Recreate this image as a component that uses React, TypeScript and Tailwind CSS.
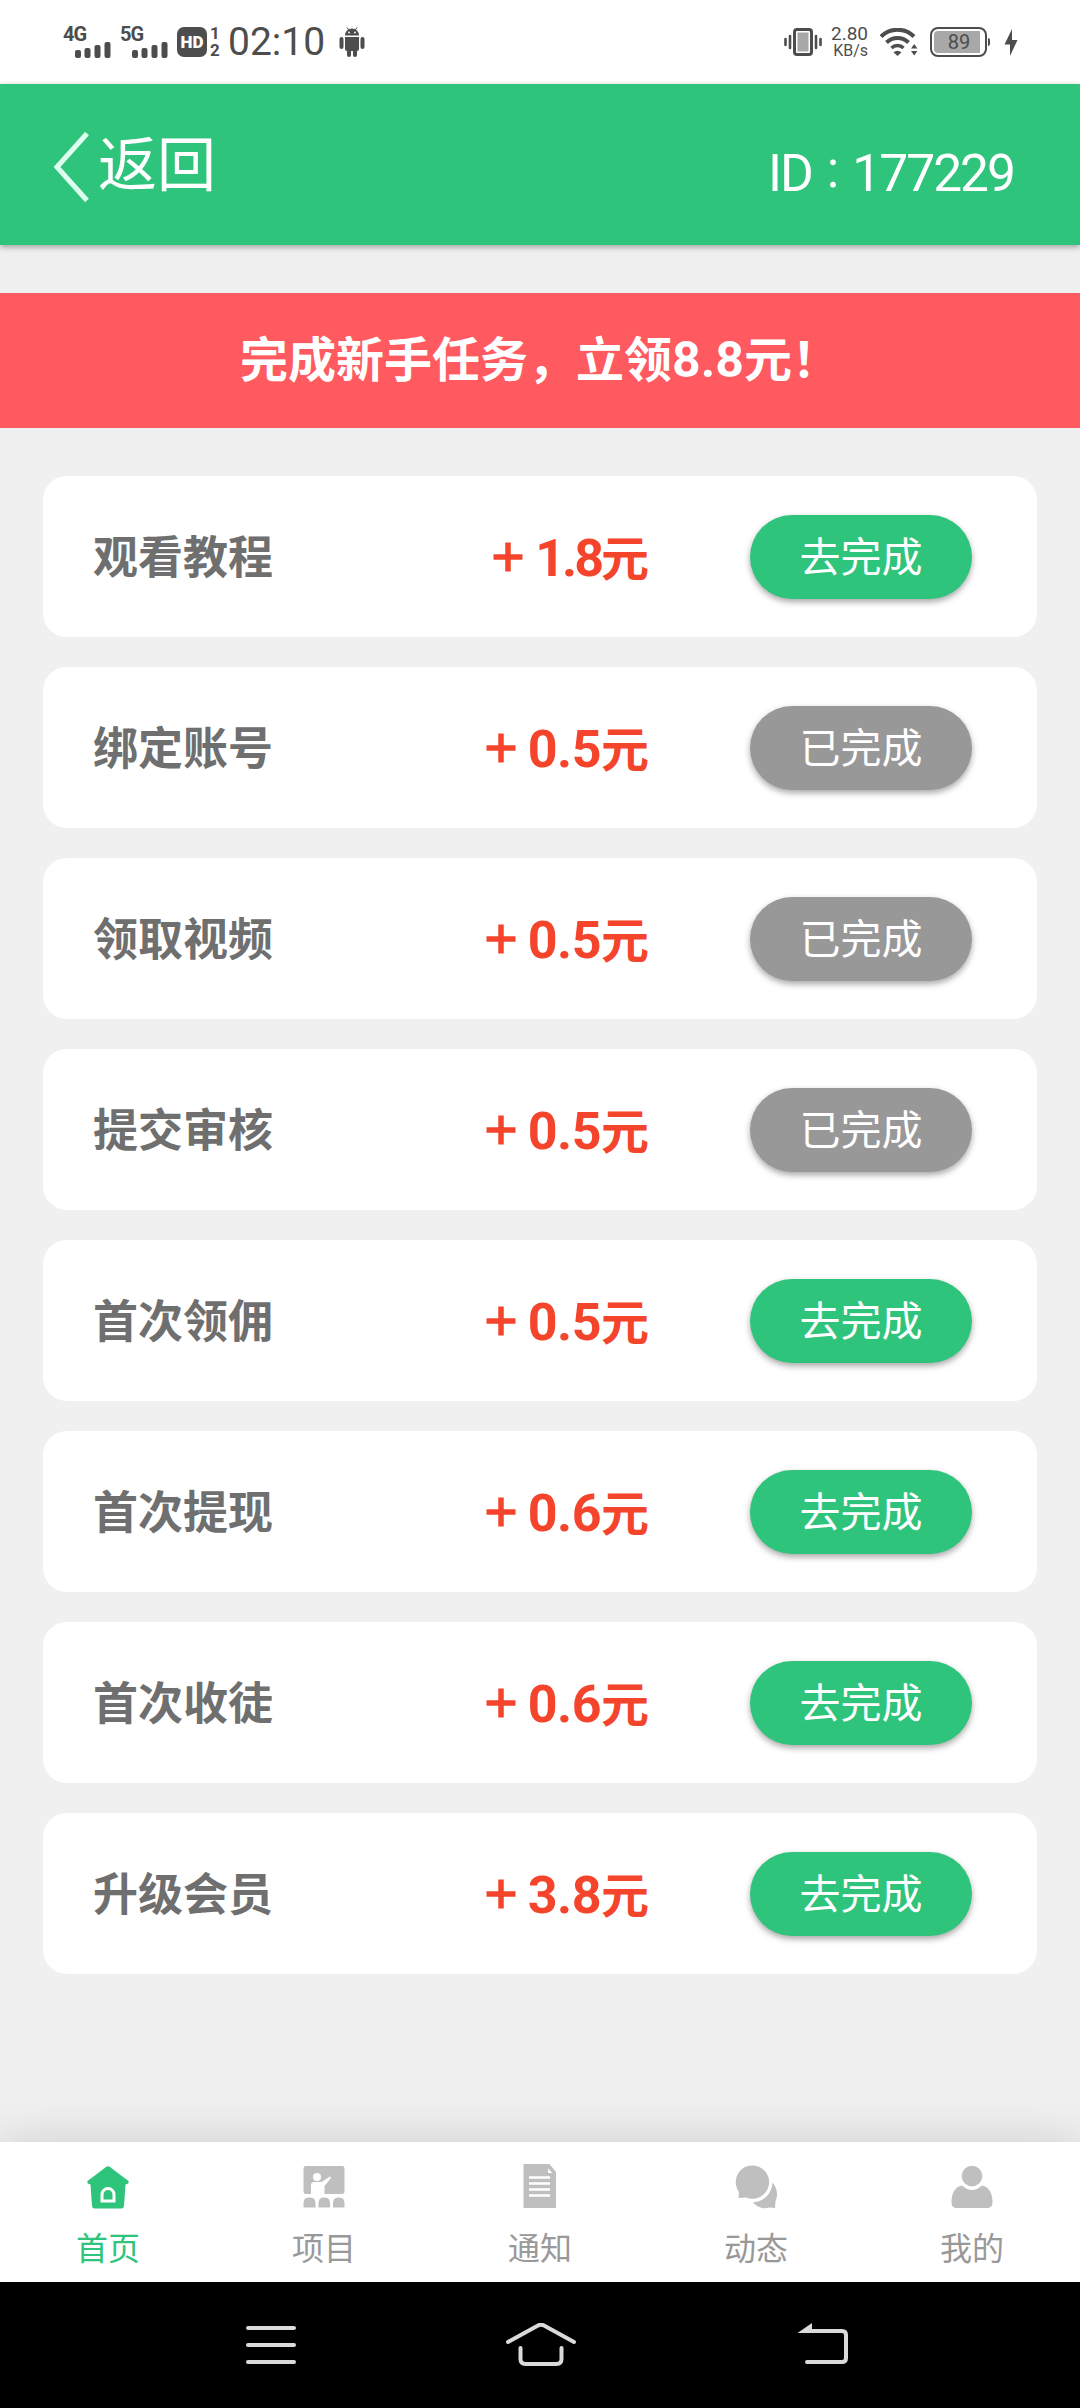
import type { ReactNode } from 'react';
import clsx from 'clsx';

interface Task {
    name: string;
    reward: string;
    done: boolean;
}

const TASKS: Task[] = [
    { name: '观看教程', reward: '1.8', done: false },
    { name: '绑定账号', reward: '0.5', done: true },
    { name: '领取视频', reward: '0.5', done: true },
    { name: '提交审核', reward: '0.5', done: true },
    { name: '首次领佣', reward: '0.5', done: false },
    { name: '首次提现', reward: '0.6', done: false },
    { name: '首次收徒', reward: '0.6', done: false },
    { name: '升级会员', reward: '3.8', done: false },
];

const Signal = ({ label }: { label: string }) => (
    <div className="w-12 h-8 flex flex-col">
        <span className="h-4 text-[20px] leading-4 font-bold tracking-[-1px]">{label}</span>
        <svg className="w-9 h-4 ml-3" viewBox="0 0 36 16" fill="currentColor">
            <rect x="0" y="8" width="6" height="8" rx="2" />
            <rect x="9.5" y="6" width="6" height="10" rx="2" />
            <rect x="19.5" y="3" width="6" height="13" rx="2" />
            <rect x="29.5" y="0" width="6" height="16" rx="2" />
        </svg>
    </div>
);

const StatusBar = () => (
    <div className="h-[84px] bg-white text-[#4d4d4d] font-[Roboto,sans-serif] flex items-center justify-between pl-[63px] pr-[62px]">
        <div className="flex items-center">
            <div className="flex gap-[9px]">
                <Signal label="4G" />
                <Signal label="5G" />
            </div>
            <div className="w-[30px] h-[30px] ml-[9px] rounded-[7px] bg-[#4d4d4d] text-white text-[17px] leading-[30px] font-black text-center">HD</div>
            <div className="flex flex-col w-3 ml-[2px] text-[17px] leading-[17px] font-bold text-center">
                <span>1</span>
                <span>2</span>
            </div>
            <span className="ml-[7px] w-[98px] text-[39px] leading-none">02:10</span>
            {/* Android robot */}
            <svg className="w-[26px] h-[30px] ml-[13px]" viewBox="0 0 26 30" fill="currentColor">
                <path d="M6 8.6a7 7.2 0 0 1 14 0z" />
                <path d="M8 0.5l2 3M18 0.5l-2 3" stroke="currentColor" strokeWidth="1" />
                <path d="M6 10h14v12a2 2 0 0 1-2 2H8a2 2 0 0 1-2-2z" />
                <rect x="0.5" y="10" width="4" height="12" rx="2" />
                <rect x="21.5" y="10" width="4" height="12" rx="2" />
                <rect x="8" y="20" width="4" height="10" rx="2" />
                <rect x="14" y="20" width="4" height="10" rx="2" />
                <circle cx="10" cy="5.5" r="0.9" fill="white" />
                <circle cx="16" cy="5.5" r="0.9" fill="white" />
            </svg>
        </div>
        <div className="flex items-center">
            {/* Vibrate */}
            <svg className="w-[38px] h-7" viewBox="0 0 38 28">
                <rect x="10.5" y="1.5" width="17" height="25" rx="2.5" fill="white" stroke="#4d4d4d" strokeWidth="3" />
                <rect x="13.5" y="4.5" width="11" height="19" fill="#a8a8a8" />
                <path d="M1.5 11v6M6 8v12M32 8v12M36.5 11v6" stroke="#4d4d4d" strokeWidth="2.6" strokeLinecap="round" />
            </svg>
            <div className="flex flex-col items-end ml-2 w-[38px]">
                <span className="text-[19px] leading-[18px]">2.80</span>
                <span className="text-[16px] leading-[16px]">KB/s</span>
            </div>
            {/* Wifi */}
            <svg className="w-[38px] h-7 ml-3" viewBox="0 0 38 28" fill="none" stroke="#4d4d4d">
                <path d="M1 8.5a23.5 23.5 0 0 1 33 0" strokeWidth="4" />
                <path d="M6.5 14.5a15.5 15.5 0 0 1 22 0" strokeWidth="4" />
                <path d="M11.5 20a8.6 8.6 0 0 1 12 0" strokeWidth="3.5" />
                <path d="M13.5 24.2q4-3 8 0L17.5 28z" fill="#4d4d4d" stroke="none" />
                <path d="M31 20.5l3.2-4.5 3.2 4.5zM31 23l3.2 4.5 3.2-4.5z" fill="#4d4d4d" stroke="none" />
            </svg>
            {/* Battery */}
            <div className="ml-3 w-[57px] h-[30px] rounded-[8px] border-[2.5px] border-[#4d4d4d] p-[2px] flex">
                <div className="w-[46px] rounded-l-[4px] bg-[#a8a8a8] text-[20px] leading-[22px] text-center pl-1">89</div>
            </div>
            <div className="w-[2px] h-2 ml-[1px] rounded-r bg-[#4d4d4d]" />
            <svg className="w-[14px] h-[27px] ml-[14px]" viewBox="0 0 14 27" fill="currentColor">
                <path d="M8 0L0.5 15.5h5.5L6 27l7.5-16H8z" />
            </svg>
        </div>
    </div>
);

const Header = () => (
    <header className="relative h-[161px] bg-[#2fc47c] text-white shadow-[0_2px_6px_rgba(0,0,0,0.35)] flex items-center justify-between pl-[53px] pr-[66px]">
        <button className="flex items-center">
            <svg className="w-9 h-[72px] mt-1" viewBox="0 0 36 72" fill="none" stroke="#dcfff0" strokeWidth="5">
                <path d="M34 2.5L4 36l30 33.5" />
            </svg>
            <span className="ml-[9px] text-[59px] leading-[72px] -mt-2">返回</span>
        </button>
        <span className="font-[Roboto,sans-serif] text-[51.5px] leading-[60px] pt-[18px] tracking-[-2px]">
            ID<span className="inline-block px-[15px] -translate-y-1">:</span>177229
        </span>
    </header>
);

const TaskRow = ({ task }: { task: Task }) => (
    <li className="h-[161px] rounded-[24px] bg-white flex items-center pl-[50px] pr-[65px]">
        <span className="w-[224px] pb-[4px] text-[45px] leading-none font-bold text-[#6f6f6f]">{task.name}</span>
        <span className="flex-1 pr-[101px] flex justify-end items-center text-[#f4452c] font-bold">
            <svg className="w-[30px] h-[30px] mr-3" viewBox="0 0 30 30" stroke="currentColor" strokeWidth="5.5">
                <path d="M0.5 15h29M15 0.5v29" />
            </svg>
            <span className="font-[Roboto,'Noto_Sans_CJK_SC',sans-serif] text-[48px] leading-none pt-[5px]">
                <span className={clsx('text-[52px] leading-none', task.reward.startsWith('1') ? 'tracking-[-3px]' : 'tracking-[-0.5px]')}>
                    {task.reward}
                </span>
                元
            </span>
        </span>
        <button
            className={clsx(
                'w-[222px] h-[84px] pb-[5px] rounded-full text-white text-[41px] leading-none shadow-[0_3px_6px_rgba(0,0,0,0.35)]',
                task.done ? 'bg-[#989898]' : 'bg-[#2fc47c]'
            )}
        >
            {task.done ? '已完成' : '去完成'}
        </button>
    </li>
);

const TabItem = ({ label, active, children }: { label: string; active?: boolean; children: ReactNode }) => (
    <button className={clsx('flex-1 flex flex-col items-center pt-[22px]', active ? 'text-[#2fc47c]' : 'text-[#bfbfbf]')}>
        <svg className="w-12 h-12" viewBox="0 0 48 48" fill="currentColor">{children}</svg>
        <span className={clsx('mt-4 text-[32px] leading-[36px]', !active && 'text-[#999]')}>{label}</span>
    </button>
);

const TabBar = () => (
    <nav className="relative h-[140px] bg-white shadow-[0_0_50px_rgba(0,0,0,0.15)] flex">
        <TabItem label="首页" active>
            <path d="M22 3q2-1.5 4 0l18.5 14q1 3-3 3.5L40 42q-.3 2.5-2.5 2.5h-27Q8.3 44.5 8 42L6.5 20.5q-4-.5-3-3.5z" />
            <path d="M18 37v-6.5a6 6 0 0 1 12 0V37z" fill="none" stroke="white" strokeWidth="3" />
        </TabItem>
        <TabItem label="项目">
            <rect x="3.5" y="2" width="41" height="28" rx="2.5" />
            <circle cx="17" cy="13" r="4" fill="white" />
            <path d="M11 30v-9q0-3 3-3h7.5L30 12.5l1.2 1.2L24.5 22v8z" fill="white" />
            <path d="M3.5 43.5v-4q0-6 5-6h2q5 0 5 6v4zM18.5 43.5v-4q0-6 5-6H25q5 0 5 6v4zM33 43.5v-4q0-6 5-6h1.5q5 0 5 6v4z" />
        </TabItem>
        <TabItem label="通知">
            <path d="M7.5 0h26L40 8v36H7.5z" />
            <path d="M13 13.5h21M13 19.5h21M13 25.5h21M13 31.5h21" stroke="white" strokeWidth="2.4" />
            <path d="M32 4.5V9h4.5z" fill="white" />
        </TabItem>
        <TabItem label="动态">
            <path d="M40.5 18.5c6 7 5 15 3 18.5l-.5 7-5.5-.5c-8 2-13.5-1-16.5-5C31 38 40 30 40.5 18.5z" />
            <path d="M6.5 34l.5-6A16.7 16.7 0 1 1 14 33.5z" />
        </TabItem>
        <TabItem label="我的">
            <circle cx="24" cy="12" r="10.3" />
            <path d="M14 21.5q10 9 20 0c7 1 10.5 8 10.5 16.5 0 4-2 6-5.5 6H9c-3.5 0-5.5-2-5.5-6C3.5 29.5 7 22.5 14 21.5z" />
        </TabItem>
    </nav>
);

const SystemNav = () => (
    <div className="relative h-[126px] bg-black flex pt-[41px] pl-[245px]">
        <svg className="w-[52px] h-11" viewBox="0 0 52 44" fill="none" stroke="#dadada" strokeWidth="4" strokeLinecap="round">
            <path d="M3 5h46M3 22h46M3 39h46" />
        </svg>
        <svg className="w-[72px] h-11 ml-[208px]" viewBox="0 0 72 44" fill="none" stroke="#dadada" strokeWidth="4" strokeLinecap="round">
            <path d="M3 19L33 2.5q3-1.5 6 0L69 19M15.5 25v11q0 5 5 5h31q5 0 5-5V25" />
        </svg>
        <svg className="w-[52px] h-11 ml-[220px]" viewBox="0 0 52 44" fill="none" stroke="#dadada" strokeWidth="4" strokeLinecap="round">
            <path d="M10 8h35q4 0 4 4v23q0 4-4 4H10" />
            <path d="M0.5 10L15 0v10z" fill="#dadada" stroke="none" />
        </svg>
    </div>
);

export default function App() {
    return (
        <div className="w-[1080px] h-[2408px] flex flex-col bg-[#f0f0f0] font-['Noto_Sans_CJK_SC',sans-serif]">
            <StatusBar />
            <Header />
            <main className="flex-1 pt-12">
                <div className="h-[135px] bg-[#ff5a60] font-[Roboto,'Noto_Sans_CJK_SC',sans-serif] text-white text-[48px] leading-[135px] font-bold text-center">
                    完成新手任务，立领<span className="text-[50px]">8.8</span>元！
                </div>
                <ul className="mt-12 px-[43px] flex flex-col gap-[30px]">
                    {TASKS.map((task) => (
                        <TaskRow key={task.name} task={task} />
                    ))}
                </ul>
            </main>
            <TabBar />
            <SystemNav />
        </div>
    );
}
